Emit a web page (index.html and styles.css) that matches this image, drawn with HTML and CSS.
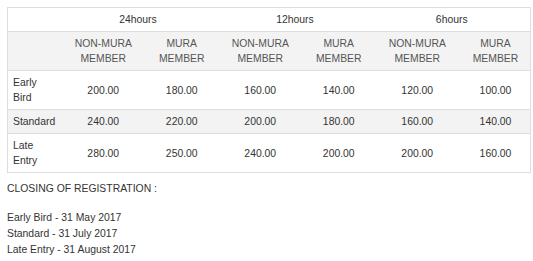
FILE: index.html
```html
<!DOCTYPE html>
<html>
<head>
<meta charset="utf-8">
<link rel="stylesheet" href="styles.css">
</head>
<body>
<table class="fees">
  <colgroup>
    <col class="c-label">
    <col class="c-val"><col class="c-val"><col class="c-val">
    <col class="c-val"><col class="c-val"><col class="c-val">
  </colgroup>
  <thead>
    <tr class="period">
      <th></th>
      <th colspan="2">24hours</th>
      <th colspan="2">12hours</th>
      <th colspan="2">6hours</th>
    </tr>
    <tr class="shaded">
      <th></th>
      <th class="val">NON-MURA MEMBER</th>
      <th class="val">MURA MEMBER</th>
      <th class="val">NON-MURA MEMBER</th>
      <th class="val">MURA MEMBER</th>
      <th class="val">NON-MURA MEMBER</th>
      <th class="val">MURA MEMBER</th>
    </tr>
  </thead>
  <tbody>
    <tr>
      <td class="label">Early Bird</td>
      <td class="val">200.00</td><td class="val">180.00</td>
      <td class="val">160.00</td><td class="val">140.00</td>
      <td class="val">120.00</td><td class="val">100.00</td>
    </tr>
    <tr class="shaded">
      <td class="label">Standard</td>
      <td class="val">240.00</td><td class="val">220.00</td>
      <td class="val">200.00</td><td class="val">180.00</td>
      <td class="val">160.00</td><td class="val">140.00</td>
    </tr>
    <tr>
      <td class="label">Late Entry</td>
      <td class="val">280.00</td><td class="val">250.00</td>
      <td class="val">240.00</td><td class="val">200.00</td>
      <td class="val">200.00</td><td class="val">160.00</td>
    </tr>
  </tbody>
</table>
<p class="closing-title">CLOSING OF REGISTRATION :</p>
<p class="closing-list">Early Bird - 31 May 2017<br>Standard - 31 July 2017<br>Late Entry - 31 August 2017</p>
</body>
</html>
```
FILE: styles.css
```css
html, body {
  margin: 0;
  padding: 0;
  background: #ffffff;
}
body {
  padding: 7px 0 0 7px;
  font-family: "Liberation Sans", Arial, sans-serif;
  font-size: 10.4px;
  line-height: 16px;
  color: #333333;
}
.fees {
  width: 524px;
  table-layout: fixed;
  border-collapse: collapse;
  border: 1px solid #dddddd;
  line-height: 15px;
}
.c-label { width: 52px; }
.fees th,
.fees td {
  font-weight: normal;
  text-align: center;
  vertical-align: middle;
  padding: 4px 5px;
  border-top: 1px solid #dddddd;
}
.fees th {
  color: #555555;
}
.fees .period th {
  border-top: none;
  color: #333333;
}
.fees .val {
  padding-left: 12px;
  padding-right: 3px;
}
.fees td.label {
  text-align: left;
}
.shaded { background: #f3f3f3; }
.closing-title {
  margin: 8px 0 0 0;
}
.closing-list {
  margin: 13px 0 0 0;
}
```
